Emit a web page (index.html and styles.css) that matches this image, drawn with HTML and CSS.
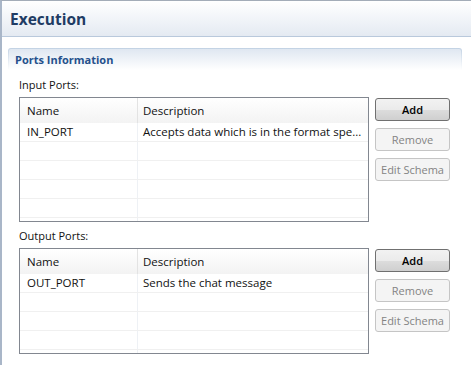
FILE: index.html
```html
<!DOCTYPE html>
<html lang="en">
<head>
    <meta charset="UTF-8">
    <title>Execution</title>
    <link rel="stylesheet" href="styles.css">
</head>
<body>
    <div class="editor">
        <div class="titleBar">
            <h1>Execution</h1>
        </div>
        <div class="content">
            <div class="section">
                <div class="sectionHead">Ports Information</div>
                <div class="sectionBody">
                    <div class="group">
                        <div class="groupLabel">Input Ports:</div>
                        <div class="groupRow">
                            <div class="table inputTable">
                                <div class="row head">
                                    <div class="cell">Name</div>
                                    <div class="cell">Description</div>
                                </div>
                                <div class="row">
                                    <div class="cell">IN_PORT</div>
                                    <div class="cell">Accepts data which is in the format spe...</div>
                                </div>
                                <div class="row"><div class="cell"></div><div class="cell"></div></div>
                                <div class="row"><div class="cell"></div><div class="cell"></div></div>
                                <div class="row"><div class="cell"></div><div class="cell"></div></div>
                                <div class="row"><div class="cell"></div><div class="cell"></div></div>
                                <div class="row"><div class="cell"></div><div class="cell"></div></div>
                            </div>
                            <div class="buttons">
                                <button class="btn">Add</button>
                                <button class="btn" disabled>Remove</button>
                                <button class="btn" disabled>Edit Schema</button>
                            </div>
                        </div>
                    </div>
                    <div class="group">
                        <div class="groupLabel">Output Ports:</div>
                        <div class="groupRow">
                            <div class="table outputTable">
                                <div class="row head">
                                    <div class="cell">Name</div>
                                    <div class="cell">Description</div>
                                </div>
                                <div class="row">
                                    <div class="cell">OUT_PORT</div>
                                    <div class="cell">Sends the chat message</div>
                                </div>
                                <div class="row"><div class="cell"></div><div class="cell"></div></div>
                                <div class="row"><div class="cell"></div><div class="cell"></div></div>
                                <div class="row"><div class="cell"></div><div class="cell"></div></div>
                                <div class="row"><div class="cell"></div><div class="cell"></div></div>
                            </div>
                            <div class="buttons">
                                <button class="btn">Add</button>
                                <button class="btn" disabled>Remove</button>
                                <button class="btn" disabled>Edit Schema</button>
                            </div>
                        </div>
                    </div>
                </div>
            </div>
        </div>
    </div>
</body>
</html>
```

FILE: styles.css
```css
body{
    margin: 0;
    background: #fff;
    font-family: "Open Sans", sans-serif;
    font-size: 11px;
    color: #111;
}
.editor{
    height: 100vh;
    box-sizing: border-box;
    border-top: 1px solid #a3acb8;
    border-left: 2px solid #a9b6c8;
}
.titleBar{
    height: 35px;
    display: flex;
    align-items: center;
    padding-left: 8px;
    background: linear-gradient(#ffffff, #e4eaf2);
    border-bottom: 1px solid #b9c9dc;
}
h1{
    margin: 0;
    font-size: 15.5px;
    font-weight: bold;
    color: #1f3c64;
}
.content{
    padding: 11px 9px 0 6px;
}
.sectionHead{
    height: 21px;
    line-height: 21px;
    padding-left: 6px;
    font-size: 11px;
    font-weight: bold;
    color: #24508c;
    border: 1px solid transparent;
    border-bottom: none;
    border-radius: 3px 3px 0 0;
    background: linear-gradient(#dfe7f1, #fff) padding-box, linear-gradient(#c2d2e4, #fff) border-box;
}
.sectionBody{
    padding: 7px 0 0 11px;
}
.group + .group{
    margin-top: 6px;
}
.groupLabel{
    height: 16px;
    line-height: 16px;
    margin-bottom: 4px;
}
.groupRow{
    display: flex;
    align-items: flex-start;
    gap: 6px;
}
.table{
    width: 348px;
    border: 1px solid #828790;
    overflow: hidden;
    font-size: 11.5px;
}
.inputTable{
    height: 123px;
}
.outputTable{
    height: 104px;
}
.row{
    display: grid;
    grid-template-columns: 118px 1fr;
    height: 19px;
    box-sizing: border-box;
    border-bottom: 1px solid #f0f0f0;
}
.row .cell{
    line-height: 18px;
    padding-left: 5px;
    white-space: nowrap;
    overflow: hidden;
}
.row .cell:first-child{
    border-right: 1px solid #eef1f5;
    padding-left: 7px;
}
.row.head{
    height: 25px;
    border-bottom: none;
    background: linear-gradient(#ffffff, #f3f3f3);
}
.row.head .cell{
    line-height: 25px;
}
.row.head .cell:first-child{
    border-right-color: #e3e3e3;
}
.buttons{
    display: flex;
    flex-direction: column;
    gap: 7px;
    margin-top: 1px;
}
.btn{
    width: 75px;
    height: 23px;
    padding: 0;
    box-sizing: border-box;
    border: 1px solid #707070;
    border-radius: 3px;
    background: linear-gradient(#f2f2f2 0, #ebebeb 50%, #dddddd 50%, #cfcfcf 100%);
    font-family: inherit;
    font-size: 11px;
    font-weight: 600;
    color: #000;
}
.btn:disabled{
    border-color: #c5c5c5;
    background: #f4f4f4;
    color: #838383;
    font-weight: normal;
}
```
